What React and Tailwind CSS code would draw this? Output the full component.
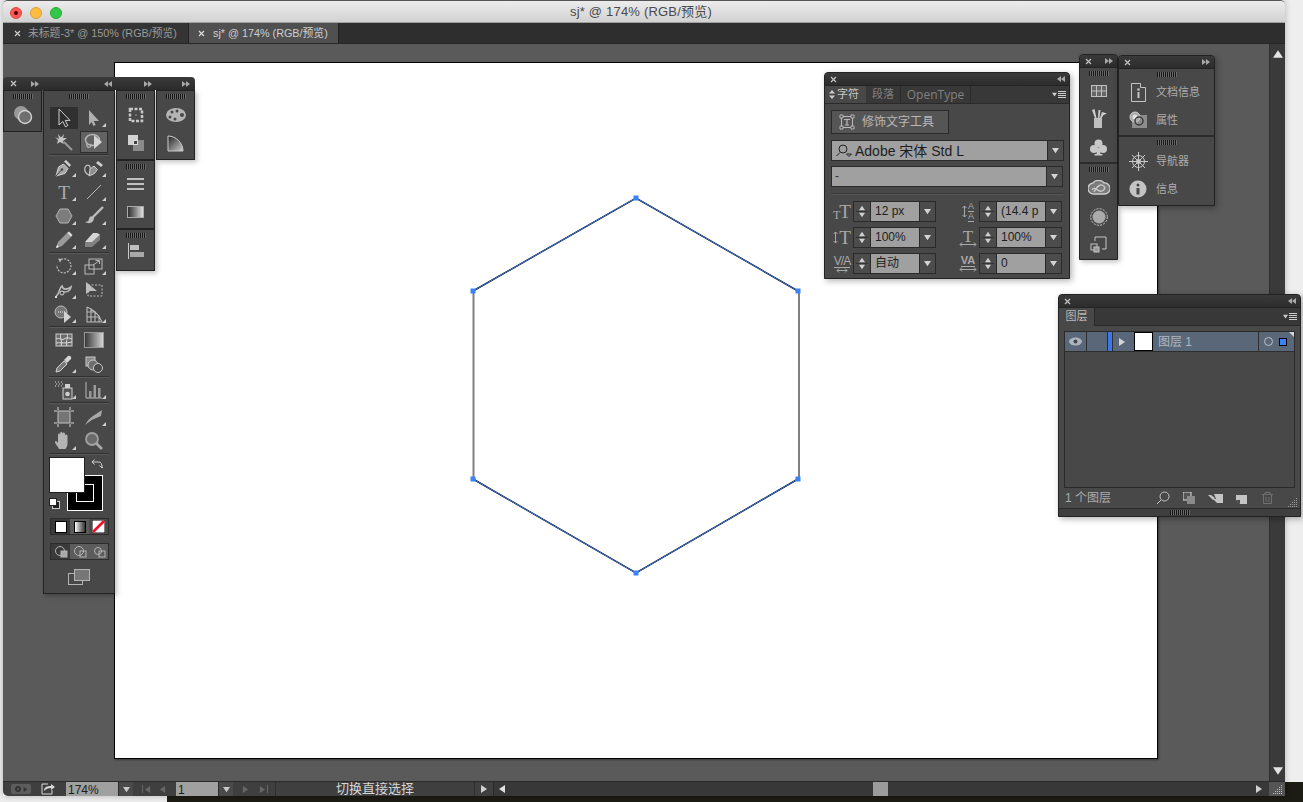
const C = "#b9b9b9";

const Ico = ({ w = 20, h = 20, vb, children, className = "" }) => (
  <svg width={w} height={h} viewBox={vb || `0 0 ${w} ${h}`} className={className} fill="none" stroke={C} strokeWidth="1">
    {children}
  </svg>
);

const Tri = ({ dir = "down", size = 7, color = "#c8c8c8" }) => {
  const pts = { down: "0,1 8,1 4,7", up: "0,7 8,7 4,1", left: "7,0 7,8 1,4", right: "1,0 1,8 7,4" };
  return (
    <svg width={size} height={size} viewBox="0 0 8 8" className="shrink-0">
      <polygon points={pts[dir]} fill={color} />
    </svg>
  );
};

const DoubleArrow = ({ left }) => (
  <svg width="8" height="6" className="shrink-0">
    <path d={left ? "M4 0v6L0 3zM8 0v6L4 3z" : "M0 0v6l4-3zM4 0v6l4-3z"} fill="#a8a8a8" />
  </svg>
);

const CloseX = () => (
  <svg width="7" height="7" viewBox="0 0 7 7">
    <path d="M1 1l5 5M6 1L1 6" stroke="#c4c4c4" strokeWidth="1.2" />
  </svg>
);

const PanelHead = ({ left }) => (
  <div className="h-[13px] flex items-center justify-between pl-[5px] pr-[4px] bg-gradient-to-b from-[#3a3a3a] to-[#2c2c2c] border-b border-[#242424] rounded-t-[4px]">
    <CloseX />
    <DoubleArrow left={left} />
  </div>
);

const Grip = () => (
  <div className="h-[5px] w-[20px] mx-auto bg-[repeating-linear-gradient(90deg,#151515_0,#151515_1px,#6a6a6a_1px,#6a6a6a_2px)]" />
);

const MenuIcon = () => (
  <div className="flex items-center gap-[1px]">
    <Tri size={5} color="#ccc" />
    <div className="w-[8px] h-[7px] bg-[repeating-linear-gradient(180deg,#ccc_0,#ccc_1px,transparent_1px,transparent_2px)]" />
  </div>
);

const DotGrip = ({ color = "#c0c0c0" }) => (
  <svg width="10" height="10">
    {[[8, 0], [6, 2], [8, 2], [4, 4], [6, 4], [8, 4], [2, 6], [4, 6], [6, 6], [8, 6], [0, 8], [2, 8], [4, 8], [6, 8], [8, 8]].map(([x, y]) => (
      <rect key={x + "-" + y} x={x} y={y} width="1" height="1" fill={color} />
    ))}
  </svg>
);

const Cell = ({ children, h = 28 }) => (
  <div className="flex items-center justify-center" style={{ height: h }}>
    {children}
  </div>
);

/* tool icons */
const icons = {
  select: (
    <Ico>
      <path d="M5 1v16l3.8-3.600 2.600 5.400 2.400-1.200-2.600-5.200H16z" fill="#2c2c2c" stroke="#d0d0d0" />
    </Ico>
  ),
  direct: (
    <Ico>
      <path d="M5 2v15l3.500-4H15z" fill="#b0b0b0" stroke="none" />
      <path d="M8 12l2.500 5.500" stroke="#b0b0b0" strokeWidth="2.400" />
    </Ico>
  ),
  wand: (
    <Ico>
      <path d="M1 5l4 2-1-5 3 3.500L10 2 9 6l4 0-4 3 1 3-4-2-3 2 1-4z" fill="#c4c4c4" stroke="none" />
      <path d="M10 10l8 8" stroke="#9a9a9a" strokeWidth="2" />
    </Ico>
  ),
  lasso: (
    <Ico>
      <ellipse cx="8.500" cy="8" rx="7" ry="5.500" strokeWidth="1.400" />
      <path d="M3 11c-1 3 1 5 3 4s1-3 0-3" strokeWidth="1.200" />
      <path d="M10 3v14l8-7z" fill="#d4d4d4" stroke="none" />
    </Ico>
  ),
  pen: (
    <Ico>
      <path d="M2 18l2.500-9 5-3 4.500 4.500-3 5z" fill="#a8a8a8" stroke="#cfcfcf" />
      <path d="M2 18l5.500-6" stroke="#444" />
      <circle cx="8" cy="11.500" r="1.200" fill="#444" stroke="none" />
      <path d="M10 3.500l2-1.500 5 5-1.500 2z" fill="#cfcfcf" stroke="none" />
    </Ico>
  ),
  curve: (
    <Ico>
      <path d="M5 18l1-7 4-3 3.500 3.500-3 4z" fill="#8f8f8f" stroke="#cfcfcf" />
      <path d="M12 5l2-2 5 4-2 2z" fill="#cfcfcf" stroke="none" />
      <path d="M5 17C0 15 0 10 2 8s5 0 4 3" strokeWidth="1.300" />
    </Ico>
  ),
  type: <span className="font-['Liberation_Serif',serif] text-[19px] leading-none text-[#adadad]">T</span>,
  line: (
    <Ico>
      <path d="M3 17L17 3" />
    </Ico>
  ),
  hex: (
    <Ico>
      <polygon points="6,3 14,3 18,10 14,17 6,17 2,10" fill="#7c7c7c" stroke="#b4b4b4" />
    </Ico>
  ),
  brush: (
    <Ico>
      <path d="M19 1L9 11" stroke="#bdbdbd" strokeWidth="2.400" />
      <path d="M10 11c-3-2-5 0-5 2s-2 3-4 3c3 2 9 2 9-5z" fill="#bdbdbd" stroke="none" />
    </Ico>
  ),
  pencil: (
    <Ico>
      <path d="M2 18l2-6L13 3l4 4-9 9z" fill="#9a9a9a" stroke="none" />
      <path d="M13 3l2-1.500 3.500 3.500L17 7z" fill="#dcdcdc" stroke="none" />
      <path d="M2 18l1-3 2 2z" fill="#eee" stroke="none" />
    </Ico>
  ),
  eraser: (
    <Ico>
      <path d="M1 13l8-8h7v5l-8 7H1z" fill="#828282" stroke="none" />
      <path d="M1 12h7l8-7.500L13 3H9z" fill="#d6d6d6" stroke="none" />
    </Ico>
  ),
  rotate: (
    <Ico>
      <path d="M7 3.500A7 7 0 1 1 3 9" strokeDasharray="2 1.300" strokeWidth="1.300" />
      <path d="M4 2.500l4 .5-2 3.500z" fill={C} stroke="none" />
    </Ico>
  ),
  scale: (
    <Ico>
      <rect x="5" y="3" width="13" height="10" />
      <rect x="1" y="9" width="9" height="9" />
      <path d="M9 9l6-4M11.500 4.500H15.500V8" />
    </Ico>
  ),
  warp: (
    <Ico>
      <path d="M2 16c3-1 3-8 6-10 1 4 5 4 9 1-1 5-4 5-8 5" strokeWidth="1.600" />
      <circle cx="8" cy="13" r="2" fill="#3f3f3f" stroke="#ddd" />
      <rect x="1" y="16" width="2" height="2" fill="#ddd" stroke="none" />
    </Ico>
  ),
  free: (
    <Ico>
      <rect x="4" y="5" width="14" height="11" strokeDasharray="2 1.500" />
      <path d="M2 2v12l4-3h7z" fill="#bdbdbd" stroke="none" />
    </Ico>
  ),
  shape: (
    <Ico>
      <circle cx="7" cy="8" r="6" fill="#777" stroke="#bcbcbc" />
      <path d="M4 8h7" stroke="#eee" strokeDasharray="1 1" />
      <path d="M10 7v12l7-6z" fill="#d2d2d2" stroke="none" />
    </Ico>
  ),
  persp: (
    <Ico>
      <path d="M3 3v15h15M3 3l4 2 4 3 4 4 3 6M7 5v13M11 8v10M15 12v6M3 8h9M3 13h13" strokeWidth="1.100" />
    </Ico>
  ),
  mesh: (
    <Ico>
      <rect x="2" y="4" width="16" height="12" fill="#6c6c6c" stroke="#ccc" />
      <path d="M2 9c4-2 5 2 8 0s5-1 8 0M7 4c-2 4 2 6 0 12M13 4c2 4-2 6 0 12M2 13c4-1 10 1 16-1" stroke="#ddd" />
    </Ico>
  ),
  eyedrop: (
    <Ico>
      <path d="M2 18l1-4 7-7 3 3-7 7z" fill="#777" stroke="#d6d6d6" />
      <path d="M10 6l4-4c2-1 4 1 3 3l-4 4z" fill="#d6d6d6" stroke="none" />
    </Ico>
  ),
  blend: (
    <Ico>
      <rect x="2" y="3" width="9" height="9" fill="#8a8a8a" stroke="#c8c8c8" />
      <circle cx="9" cy="11" r="5" fill="#6e6e6e" stroke="#c8c8c8" />
      <circle cx="14" cy="14" r="4.500" fill="#4a4a4a" stroke="#c8c8c8" />
    </Ico>
  ),
  spray: (
    <Ico>
      <rect x="9" y="8" width="9" height="11" fill="#555" stroke="#cfcfcf" />
      <circle cx="13.500" cy="14" r="2.300" fill="#cfcfcf" stroke="none" />
      <rect x="11" y="4" width="5" height="4" fill="#cfcfcf" stroke="none" />
      <path d="M1 2h1M4 2h1M7 2h1M2 4h1M5 4h1M8 4h1M1 6h1M4 6h1M7 6h1" stroke="#e0e0e0" />
    </Ico>
  ),
  graph: (
    <Ico>
      <path d="M2 2v16h16" />
      <rect x="5" y="11" width="2.500" height="7" fill="#999" stroke="none" />
      <rect x="9.500" y="5" width="2.500" height="13" fill="#999" stroke="none" />
      <rect x="14" y="8" width="2.500" height="10" fill="#999" stroke="none" />
    </Ico>
  ),
  artboard: (
    <Ico>
      <rect x="4" y="4" width="12" height="12" fill="#757575" stroke="#c2c2c2" />
      <path d="M4 0v3M16 0v3M4 17v3M16 17v3M0 4h3M0 16h3M17 4h3M17 16h3" stroke="#d6d6d6" />
    </Ico>
  ),
  slice: (
    <Ico>
      <path d="M1 18c2-4 5-7 8-9l9-6-1 6-7 3c-3 1-6 4-9 6z" fill="#a8a8a8" stroke="none" />
    </Ico>
  ),
  hand: (
    <Ico>
      <path d="M5 18c-1-3-4-5-4-7s2-1 3 1V4c0-2 2-2 2 0V2.500c0-2 2.500-2 2.500 0V3c0-2 2.500-2 2.500 0v2c0-2 2.500-2 2.500 0v8c0 2-1 3-2 5z" fill="#b4b4b4" stroke="none" />
    </Ico>
  ),
  zoom: (
    <Ico>
      <circle cx="8" cy="8" r="6" fill="#6a6a6a" stroke="#a0a0a0" strokeWidth="1.800" />
      <path d="M12 12l6 6" stroke="#a8a8a8" strokeWidth="2.600" />
    </Ico>
  ),
  gradient: (
    <svg width="20" height="16">
      <defs>
        <linearGradient id="tg">
          <stop offset="0" stopColor="#333" />
          <stop offset="1" stopColor="#d8d8d8" />
        </linearGradient>
      </defs>
      <rect x=".5" y=".5" width="19" height="15" fill="url(#tg)" stroke="#999" />
    </svg>
  ),
};

const Tool = ({ icon, corner, selected, hot }) => (
  <div
    className={`relative w-[28px] h-[22px] flex items-center justify-center border ${
      selected ? "bg-[#303030] border-[#303030]" : hot ? "bg-[#626262] border-[#2e2e2e]" : "border-transparent"
    }`}
  >
    {icons[icon]}
    {corner && <div className="absolute right-[1px] bottom-[1px] w-0 h-0 border-l-[4px] border-l-transparent border-b-[4px] border-b-[#d0d0d0]" />}
  </div>
);

const ToolRow = ({ a, b, ca, cb, sel, hot }) => (
  <div className="h-[24px] flex items-center gap-[2px] pl-[6px]">
    <Tool icon={a} corner={ca} selected={sel} />
    <Tool icon={b} corner={cb} hot={hot} />
  </div>
);

const Sep = ({ cls = "" }) => <div className={`h-[1px] mx-[5px] bg-[#2f2f2f] border-b border-[#5a5a5a] box-content ${cls}`} />;

const Toolbar = () => (
  <div className="w-[72px] h-[504px] bg-[#484848] border border-[#222] pt-[3px] shadow-[2px_2px_5px_rgba(0,0,0,0.25)]">
    <Grip />
    <div className="h-[7px]" />
    <ToolRow a="select" b="direct" cb sel />
    <ToolRow a="wand" b="lasso" hot />
    <Sep />
    <ToolRow a="pen" b="curve" ca cb />
    <ToolRow a="type" b="line" ca cb />
    <ToolRow a="hex" b="brush" ca cb />
    <ToolRow a="pencil" b="eraser" ca cb />
    <Sep />
    <ToolRow a="rotate" b="scale" ca cb />
    <ToolRow a="warp" b="free" ca />
    <ToolRow a="shape" b="persp" ca cb />
    <Sep />
    <ToolRow a="mesh" b="gradient" />
    <ToolRow a="eyedrop" b="blend" ca />
    <Sep />
    <ToolRow a="spray" b="graph" ca cb />
    <Sep cls="mb-[1px]" />
    <ToolRow a="artboard" b="slice" cb />
    <ToolRow a="hand" b="zoom" ca />
    <Sep cls="mb-[2px]" />
    <div className="relative h-[54px]">
      <div className="absolute left-[23px] top-[18px] w-[36px] h-[36px] bg-black border border-white flex items-center justify-center">
        <div className="w-[18px] h-[18px] border border-white" />
      </div>
      <div className="absolute left-[5px] top-0 w-[36px] h-[36px] bg-white border border-[#222]" />
      <div className="absolute left-[47px] top-[1px]">
        <svg width="12" height="12" viewBox="0 0 12 12" fill="none" stroke="#d0d0d0">
          <path d="M1 4h7c2 0 3 2 3 5M1 4l2.500-2.500M1 4l2.500 2.500M11 10L8.500 7.500M11 10l2-2" />
        </svg>
      </div>
      <div className="absolute left-[5px] top-[41px] w-[8px] h-[8px] bg-white border border-[#222] z-10" />
      <div className="absolute left-[8px] top-[44px] w-[8px] h-[8px] bg-[#222] border border-[#ccc]" />
    </div>
    <div className="h-[7px]" />
    <div className="mx-[6px] h-[17px] w-[59px] flex border border-[#2c2c2c]">
      <div className="flex-1 flex items-center justify-center bg-[#3a3a3a]">
        <div className="w-[12px] h-[12px] bg-white border border-black" />
      </div>
      <div className="flex-1 flex items-center justify-center bg-[#5c5c5c]">
        <div className="w-[12px] h-[12px] bg-gradient-to-r from-white to-[#333] border border-black" />
      </div>
      <div className="flex-1 flex items-center justify-center bg-[#4a4a4a]">
        <svg width="13" height="13">
          <rect width="13" height="13" fill="#fff" stroke="#000" />
          <path d="M1 12L12 1" stroke="#f0102a" strokeWidth="2.600" />
        </svg>
      </div>
    </div>
    <div className="h-[8px]" />
    <div className="mx-[6px] h-[17px] w-[59px] flex border border-[#2c2c2c] bg-[#5c5c5c]">
      {[0, 1, 2].map((i) => (
        <div key={i} className={`flex-1 flex items-center justify-center ${i === 0 ? "bg-[#3a3a3a]" : ""}`}>
          <svg width="14" height="13" fill="none" stroke="#b4b4b4">
            <circle cx="6" cy="6" r={i === 2 ? 3.5 : 4.5} />
            <rect x="7" y="6" width="6" height="6" fill={i === 0 ? "#aaa" : "none"} />
          </svg>
        </div>
      ))}
    </div>
    <div className="h-[9px]" />
    <div className="flex justify-center">
      <svg width="22" height="16" fill="none" stroke="#b4b4b4">
        <rect x=".5" y="4.500" width="14" height="11" />
        <rect x="6.500" y=".5" width="15" height="11" fill="#777" />
      </svg>
    </div>
  </div>
);

const SideCol = ({ children, w = 39, h, cls = "" }) => (
  <div className={`bg-[#484848] border border-[#222] pt-[3px] ${cls}`} style={{ width: w, height: h }}>
    <Grip />
    {children}
  </div>
);

const LeftDock = () => (
  <div className="absolute left-[3px] top-[77px] w-[192px] z-10">
    <div className="h-[13px] bg-gradient-to-b from-[#3a3a3a] to-[#2c2c2c] rounded-t-[4px] flex items-center pl-[7px] w-full">
      <CloseX />
      <div className="ml-[14px] flex"><DoubleArrow /></div>
      <div className="ml-[65px] flex"><DoubleArrow left /></div>
      <div className="ml-[32px] flex"><DoubleArrow /></div>
      <div className="ml-[30px] flex"><DoubleArrow /></div>
    </div>
    <div className="flex items-start gap-[1px]">
      <SideCol h={42}>
        <Cell h={32}>
          <svg width="20" height="20" fill="none">
            <circle cx="8" cy="8" r="7" fill="#9a9a9a" />
            <circle cx="12" cy="12" r="6.500" fill="#6f6f6f" stroke="#d2d2d2" strokeWidth="1.400" />
          </svg>
        </Cell>
      </SideCol>
      <Toolbar />
      <div className="shadow-[2px_2px_5px_rgba(0,0,0,0.25)]">
        <SideCol h={70}>
          <Cell h={32}>
            <svg width="16" height="16" fill="none">
              <rect x="2" y="2" width="12" height="12" stroke="#c8c8c8" strokeWidth="2.500" strokeDasharray="3 1.500" />
              <rect x="7.500" y="7.500" width="1" height="1" fill="#e4e4e4" />
            </svg>
          </Cell>
          <Cell h={24}>
            <svg width="16" height="16" fill="none">
              <rect x="0" y="0" width="10" height="10" fill="#d2d2d2" />
              <rect x="5" y="5" width="11" height="11" fill="#8a8a8a" />
              <rect x="5.500" y="5.500" width="4" height="4" fill="#3e3e3e" stroke="#ddd" />
            </svg>
          </Cell>
        </SideCol>
        <SideCol h={69}>
          <Cell h={30}>
            <div className="w-[17px] h-[12px] bg-[repeating-linear-gradient(180deg,#c0c0c0_0,#c0c0c0_2px,transparent_2px,transparent_5px)]" />
          </Cell>
          <Cell h={26}>
            <div className="w-[17px] h-[12px] bg-gradient-to-r from-[#333] to-[#e0e0e0] border border-[#aaa]" />
          </Cell>
        </SideCol>
        <SideCol h={42}>
          <Cell h={26}>
            <svg width="16" height="16">
              <rect x="0" y="0" width="1" height="16" fill="#c8c8c8" />
              <rect x="2" y="2" width="9" height="5" fill="#c0c0c0" />
              <rect x="2" y="9" width="14" height="5" fill="#a8a8a8" />
            </svg>
          </Cell>
        </SideCol>
      </div>
      <SideCol h={70} cls="shadow-[2px_2px_5px_rgba(0,0,0,0.25)]">
        <Cell h={32}>
          <svg width="20" height="16">
            <ellipse cx="10" cy="8" rx="10" ry="7" fill="#b4b4b4" />
            <circle cx="6" cy="5" r="1.500" fill="#484848" />
            <circle cx="11" cy="4" r="1.500" fill="#484848" />
            <circle cx="4" cy="10" r="1.500" fill="#484848" />
            <circle cx="9" cy="12" r="1.500" fill="#484848" />
            <circle cx="16" cy="8" r="2" fill="#484848" />
          </svg>
        </Cell>
        <Cell h={24}>
          <svg width="17" height="17">
            <defs>
              <linearGradient id="sw" x1="0" y1="0" x2="1" y2="1">
                <stop offset="0" stopColor="#222" />
                <stop offset="1" stopColor="#ccc" />
              </linearGradient>
            </defs>
            <path d="M1 1c8 0 15 7 15 15H1z" fill="url(#sw)" stroke="#ccc" />
          </svg>
        </Cell>
      </SideCol>
    </div>
  </div>
);

const DropBtn = ({ w = 16, h }) => (
  <div className="bg-[#4c4c4c] border-l border-[#2a2a2a] flex items-center justify-center shrink-0" style={{ width: w, height: h }}>
    <Tri size={7} color="#d4d4d4" />
  </div>
);

const Spin = () => (
  <div className="w-[17px] h-[19px] bg-[#4c4c4c] border-r border-[#2a2a2a] flex flex-col items-center justify-center shrink-0">
    <Tri dir="up" size={6} color="#d0d0d0" />
    <div className="w-[12px] h-[1px] bg-[#333]" />
    <Tri size={6} color="#d0d0d0" />
  </div>
);

const NumField = ({ icon, value }) => (
  <div className="flex items-center w-[105px] h-[21px]">
    <div className="w-[22px] flex justify-center shrink-0">{icon}</div>
    <div className="flex border border-[#2a2a2a] h-[21px] flex-1">
      <Spin />
      <div className="flex-1 bg-[#a0a0a0] text-[#1e1e1e] text-[12px] leading-[19px] pl-[4px] whitespace-nowrap overflow-hidden">{value}</div>
      <DropBtn h={19} />
    </div>
  </div>
);

const serifT = (cls, txt = "T") => <span className={`font-['Liberation_Serif',serif] leading-none text-[#a8a8a8] ${cls}`}>{txt}</span>;

const VArrow = () => (
  <svg width="5" height="13" fill="none" stroke="#a8a8a8" className="shrink-0">
    <path d="M2.500 1v11M.5 3l2-2 2 2M.5 10l2 2 2-2" />
  </svg>
);

const HArrow = ({ w = 18 }) => (
  <svg width={w} height="5" fill="none" stroke="#a8a8a8" className="shrink-0">
    <path d={`M1 2.500h${w - 2}M3 .5l-2 2 2 2M${w - 3} .5l2 2-2 2`} />
  </svg>
);

const CharPanel = () => (
  <div className="absolute left-[824px] top-[72px] w-[246px] h-[207px] bg-[#484848] border border-[#222] rounded-t-[4px] shadow-[2px_2px_6px_rgba(0,0,0,0.3)] z-10">
    <PanelHead left />
    <div className="h-[18px] flex bg-[#383838] border-b border-[#2a2a2a] text-[11px] leading-[17px]">
      <div className="w-[41px] bg-[#484848] text-[#c8c8c8] flex items-center gap-[2px] pl-[4px]">
        <svg width="6" height="9" fill="#ccc"><path d="M3 0l3 3.500H0zM3 9L0 5.500h6z" /></svg>
        字符
      </div>
      <div className="w-[35px] text-center text-[#808080] border-r border-[#2a2a2a]">段落</div>
      <div className="w-[70px] text-center text-[#808080] text-[12px] border-r border-[#2a2a2a] font-['Open_Sans',sans-serif]">OpenType</div>
      <div className="flex-1 flex justify-end items-center pr-[3px]"><MenuIcon /></div>
    </div>
    <div className="px-[6px] pt-[6px]">
      <div className="w-[118px] h-[24px] bg-[#555] border border-[#2a2a2a] flex items-center pl-[7px] gap-[7px] text-[#b8b8b8] text-[12px]">
        <Ico w={16} h={16}>
          <rect x="2.500" y="2.500" width="11" height="11" />
          <path d="M5 5.500h6M8 5.500V11M6 11h4" strokeWidth="1.200" />
          <path d="M1 1h3v3H1zM12 1h3v3h-3zM1 12h3v3H1zM12 12h3v3h-3z" fill="#484848" />
        </Ico>
        修饰文字工具
      </div>
      <div className="mt-[6px] h-[21px] w-[233px] flex border border-[#2a2a2a]">
        <div className="flex-1 bg-[#a0a0a0] text-[#1e1e1e] text-[14px] leading-[18px] flex items-center pl-[3px] gap-[2px] whitespace-nowrap">
          <svg width="18" height="13" fill="none" stroke="#222" className="shrink-0">
            <circle cx="8" cy="5" r="4" />
            <path d="M5 8.500L1.500 12M11.500 10h5l-2.500 2.500z" />
          </svg>
          Adobe 宋体 Std L
        </div>
        <DropBtn h={19} />
      </div>
      <div className="mt-[5px] h-[21px] w-[232px] flex border border-[#2a2a2a]">
        <div className="flex-1 bg-[#a0a0a0] text-[#333] text-[12px] leading-[18px] pl-[3px]">-</div>
        <DropBtn h={19} />
      </div>
      <div className="mt-[6px] h-[1px] bg-[#383838] border-b border-[#565656] box-content" />
      <div className="mt-[6px] flex flex-col gap-[5px]">
        <div className="flex gap-[21px]">
          <NumField icon={<span className="flex items-end">{serifT("text-[12px]")}{serifT("text-[19px] -ml-[1px]")}</span>} value="12 px" />
          <NumField
            icon={
              <div className="flex items-center gap-[1px]">
                <VArrow />
                <div className="flex flex-col items-center text-[#a8a8a8] text-[9px] leading-[9px]">
                  <span className="border-b border-[#a8a8a8]">A</span>
                  <span className="border-b border-[#a8a8a8]">A</span>
                </div>
              </div>
            }
            value="(14.4 p"
          />
        </div>
        <div className="flex gap-[21px]">
          <NumField icon={<span className="flex items-center gap-[1px]"><VArrow />{serifT("text-[19px]")}</span>} value="100%" />
          <NumField
            icon={
              <div className="flex flex-col items-center">
                {serifT("text-[17px] h-[14px] leading-[14px]")}
                <HArrow />
              </div>
            }
            value="100%"
          />
        </div>
        <div className="flex gap-[21px]">
          <NumField
            icon={
              <div className="flex flex-col items-center">
                <span className="text-[#a8a8a8] text-[12px] leading-[12px] tracking-[-1px] border-b border-[#a8a8a8]">V/A</span>
                <HArrow w={12} />
              </div>
            }
            value="自动"
          />
          <NumField
            icon={
              <div className="flex flex-col items-center">
                <span className="text-[#a8a8a8] text-[11px] font-bold border-b border-[#a8a8a8] leading-[11px]">VA</span>
                <HArrow />
              </div>
            }
            value="0"
          />
        </div>
      </div>
    </div>
  </div>
);

const IconDock = () => (
  <div className="absolute left-[1079px] top-[54px] w-[39px] h-[206px] bg-[#484848] border border-[#222] rounded-t-[4px] shadow-[2px_2px_5px_rgba(0,0,0,0.25)] z-10">
    <PanelHead />
    <div className="h-[96px] pt-[3px] border-b-2 border-[#2c2c2c]">
      <Grip />
      <Cell h={29}>
        <svg width="16" height="12" fill="none" stroke="#c0c0c0">
          <rect x=".5" y=".5" width="15" height="11" fill="#666" />
          <path d="M5.500 0v12M10.500 0v12M0 6h16" />
        </svg>
      </Cell>
      <Cell h={27}>
        <svg width="17" height="19">
          <rect x="4" y="9" width="8" height="10" fill="#bfbfbf" />
          <path d="M5 9L2 1l2.500-1L6.500 9zM8 9l.5-8h2L9.500 9zM10 9l2-6 5 1.500-3.500 1.500-2 3z" fill="#cfcfcf" />
        </svg>
      </Cell>
      <Cell h={30}>
        <svg width="17" height="17" fill="#c8c8c8">
          <circle cx="8.500" cy="4.500" r="4" />
          <circle cx="4" cy="10" r="4" />
          <circle cx="13" cy="10" r="4" />
          <path d="M7.500 9h2l1 6h2v1.500h-8V15h2z" />
        </svg>
      </Cell>
    </div>
    <div className="pt-[3px]">
      <Grip />
      <Cell h={31}>
        <svg width="22" height="15" fill="none" stroke="#cfcfcf" strokeWidth="1.300">
          <path d="M6 14a5.500 5.500 0 0 1-1-11c2-3.500 9-3.500 11 0a5.500 5.500 0 0 1 1 11z" fill="#7c7c7c" />
          <path d="M4 10c3-5 6 3 10 1s3-5 0-6-5 2-8 7" />
        </svg>
      </Cell>
      <Cell h={27}>
        <svg width="18" height="18" fill="#aaa" stroke="none">
          <circle cx="9" cy="9" r="6.500" />
          <circle cx="9" cy="9" r="8.300" fill="none" stroke="#ccc" strokeDasharray="2 1.300" />
        </svg>
      </Cell>
      <Cell h={29}>
        <svg width="17" height="17" fill="none" stroke="#c4c4c4">
          <path d="M5 5V1h11v12h-4" />
          <rect x="1" y="8" width="6" height="6" />
          <rect x="4" y="11" width="5" height="5" fill="#999" />
        </svg>
      </Cell>
    </div>
  </div>
);

const NavItem = ({ icon, label, h = 28 }) => (
  <div className="flex items-center pl-[9px] gap-[8px] text-[11px] text-[#acacac] whitespace-nowrap" style={{ height: h }}>
    <div className="w-[20px] flex justify-center">{icon}</div>
    {label}
  </div>
);

const InfoPanel = () => (
  <div className="absolute left-[1118px] top-[55px] w-[97px] h-[151px] bg-[#484848] border border-[#222] rounded-t-[4px] shadow-[2px_2px_6px_rgba(0,0,0,0.3)] z-10">
    <PanelHead />
    <div className="h-[68px] pt-[3px] border-b-2 border-[#2c2c2c]">
      <Grip />
      <div className="h-[1px]" />
      <NavItem
        icon={
          <svg width="15" height="19" fill="none" stroke="#c4c4c4">
            <path d="M.5.500h9v4h5v14h-14z" />
            <circle cx="7.500" cy="6.500" r="1.300" fill="#c4c4c4" stroke="none" />
            <rect x="6.500" y="9" width="2" height="6" fill="#c4c4c4" stroke="none" />
          </svg>
        }
        label="文档信息"
      />
      <NavItem
        icon={
          <svg width="18" height="18" fill="none">
            <rect x="3" y="4" width="15" height="13" fill="#8c8c8c" />
            <circle cx="6" cy="6" r="5" fill="#aaa" stroke="#ccc" />
            <circle cx="6" cy="6" r="2.500" fill="#e4e4e4" />
            <circle cx="10" cy="10" r="4" stroke="#3a3a3a" strokeWidth="1.500" />
          </svg>
        }
        label="属性"
      />
    </div>
    <div className="pt-[3px]">
      <Grip />
      <div className="h-[2px]" />
      <NavItem
        icon={
          <svg width="19" height="19" fill="none" stroke="#c8c8c8">
            <circle cx="9.500" cy="9.500" r="6" />
            <circle cx="9.500" cy="9.500" r="2" fill="#c8c8c8" />
            <path d="M9.500 0v19M0 9.500h19M3 3l13 13M16 3L3 16" />
          </svg>
        }
        label="导航器"
      />
      <NavItem
        icon={
          <svg width="18" height="18">
            <circle cx="9" cy="9" r="8.500" fill="#c4c4c4" />
            <circle cx="9" cy="5" r="1.500" fill="#484848" />
            <rect x="7.500" y="8" width="3" height="6.500" fill="#484848" />
          </svg>
        }
        label="信息"
      />
    </div>
  </div>
);

const FootIcon = ({ children }) => <div className="w-[26px] flex justify-center">{children}</div>;

const LayersPanel = () => (
  <div className="absolute left-[1058px] top-[294px] w-[243px] h-[223px] bg-[#484848] border border-[#222] rounded-t-[4px] shadow-[2px_2px_6px_rgba(0,0,0,0.3)] z-10 flex flex-col">
    <PanelHead left />
    <div className="h-[18px] flex bg-[#383838] border-b border-[#2a2a2a] text-[11px] leading-[17px]">
      <div className="w-[36px] bg-[#484848] border-r border-[#2a2a2a] text-center text-[#b8b8b8] h-[18px]">图层</div>
      <div className="flex-1 flex justify-end items-center pr-[3px]"><MenuIcon /></div>
    </div>
    <div className="mx-[5px] mt-[5px] h-[157px] border border-[#2a2a2a]">
      <div className="h-[20px] bg-[#5a6779] border-b border-[#2e2e2e] flex items-stretch relative">
        <div className="w-[22px] border-r border-[#2e2e2e] flex items-center justify-center">
          <svg width="13" height="9">
            <ellipse cx="6.500" cy="4.500" rx="6.500" ry="4" fill="#aeb4bc" />
            <circle cx="6.500" cy="4.500" r="2" fill="#3f4752" />
          </svg>
        </div>
        <div className="w-[21px] border-r border-[#2e2e2e]" />
        <div className="w-[5px] flex items-stretch border-r border-[#2e2e2e]">
          <div className="w-[4px] bg-[#3b78e7]" />
        </div>
        <div className="w-[21px] flex items-center pl-[5px]"><Tri dir="right" size={8} color="#d6d6d6" /></div>
        <div className="w-[19px] h-[19px] bg-white border border-black" />
        <div className="ml-[5px] flex-1 text-[12px] leading-[20px] text-[#b0b6bf] whitespace-nowrap">图层 1</div>
        <div className="w-[36px] border-l border-[#2e2e2e] flex items-center gap-[6px] pl-[5px]">
          <div className="w-[9px] h-[9px] rounded-full border border-[#c0c0c0]" />
          <div className="w-[8px] h-[8px] bg-[#3b82f6] border border-black" />
        </div>
        <div className="absolute right-0 top-0 w-0 h-0 border-l-[5px] border-l-transparent border-t-[5px] border-t-[#d8d8d8]" />
      </div>
    </div>
    <div className="h-[20px] px-[6px] flex items-center justify-between text-[12px] text-[#acacac] relative">
      <span>1 个图层</span>
      <div className="flex items-center mr-[14px]">
        <FootIcon>
          <svg width="14" height="14" fill="none" stroke="#c4c4c4"><circle cx="8.500" cy="5.500" r="4.500" /><path d="M5 9l-4 4" /></svg>
        </FootIcon>
        <FootIcon>
          <svg width="12" height="12"><rect width="8" height="8" fill="#555" stroke="#ddd" /><rect x="4" y="4" width="8" height="8" fill="#8a8a8a" /></svg>
        </FootIcon>
        <FootIcon>
          <svg width="15" height="11"><path d="M0 2h3l4 3-2 2L2 4zM6 1h9v9H9L5 6h3z" fill="#c4c4c4" /></svg>
        </FootIcon>
        <FootIcon>
          <svg width="11" height="11"><path d="M0 2h11v9H4L0 7z" fill="#c4c4c4" /><path d="M0 7h4v4z" fill="#444" /></svg>
        </FootIcon>
        <FootIcon>
          <svg width="11" height="12" fill="none" stroke="#6f6f6f"><path d="M0 2.500h11M3 2V.5h5V2M1.500 3v8.500h8V3M4 5v5M7 5v5" /></svg>
        </FootIcon>
      </div>
      <div className="absolute right-[2px] bottom-0 flex"><DotGrip color="#999" /></div>
    </div>
    <div className="flex-1 border-t border-[#2a2a2a] bg-[#3f3f3f] flex items-center">
      <Grip />
    </div>
  </div>
);

const Hexagon = () => {
  const pts = [
    [636, 198], [798, 291], [798, 479], [636, 573], [473, 479], [473, 291],
  ];
  const diagonals = "M473 291L636 198L798 291M473 479L636 573L798 479";
  return (
    <svg width="1303" height="802" className="absolute left-0 top-0 pointer-events-none">
      <path d={diagonals} fill="none" stroke="#000" strokeWidth="1.500" />
      <path d={diagonals} fill="none" stroke="#3b7bea" strokeWidth="1" />
      <path d="M799 291V479M473.500 291V479" stroke="#808080" strokeWidth="2" />
      {pts.map(([x, y]) => (
        <rect key={x + "-" + y} x={x - 2.5} y={y - 2.5} width="5" height="5" fill="#3b82f6" />
      ))}
    </svg>
  );
};

const NavGlyph = ({ dir, bar }) => (
  <div className="flex items-center gap-[1px] shrink-0">
    {bar && dir === "left" && <div className="w-[1px] h-[8px] bg-[#666]" />}
    <Tri dir={dir} size={7} color="#666" />
    {bar && dir === "right" && <div className="w-[1px] h-[8px] bg-[#666]" />}
  </div>
);

const BottomBar = () => (
  <div className="h-[15px] bg-[#3f3f3f] border-t border-[#2a2a2a] rounded-bl-[5px] flex items-center text-[#d0d0d0] text-[12px] leading-none shrink-0">
    <div className="w-[8px]" />
    <div className="w-[20px] h-[10px] bg-[#5c5c5c] rounded-[2px] flex items-center justify-center gap-[2px]">
      <div className="w-[6px] h-[6px] rounded-full border-2 border-[#333]" />
      <Tri dir="right" size={5} color="#333" />
    </div>
    <div className="w-[10px]" />
    <svg width="14" height="12" fill="none" stroke="#d8d8d8">
      <path d="M7 1H1v10h10V7" />
      <path d="M3 8c0-4 3-5 7-5V1l4 3-4 3V5C7 5 5 6 3 8z" fill="#d8d8d8" stroke="none" />
    </svg>
    <div className="w-[11px]" />
    <div className="w-[52px] h-[14px] bg-[#a0a0a0] text-[#1c1c1c] pl-[2px] leading-[16px] overflow-hidden">174%</div>
    <div className="w-[15px] h-[14px] flex items-center justify-center border-l border-[#2a2a2a] bg-[#4a4a4a]"><Tri size={7} /></div>
    <div className="w-[9px]" />
    <div className="flex items-center gap-[8px] w-[34px]">
      <NavGlyph dir="left" bar />
      <NavGlyph dir="left" />
    </div>
    <div className="w-[42px] h-[14px] bg-[#a0a0a0] text-[#1c1c1c] pl-[2px] leading-[16px] overflow-hidden">1</div>
    <div className="w-[15px] h-[14px] flex items-center justify-center border-l border-[#2a2a2a] bg-[#4a4a4a]"><Tri size={7} /></div>
    <div className="w-[9px]" />
    <div className="flex items-center gap-[10px] w-[33px]">
      <NavGlyph dir="right" />
      <NavGlyph dir="right" bar />
    </div>
    <div className="w-[200px] h-full border-x border-[#2e2e2e] flex items-center justify-center text-[13px] leading-[14px] text-[#d6d6d6]">切换直接选择</div>
    <div className="w-[18px] flex justify-center"><Tri dir="right" size={8} color="#d0d0d0" /></div>
    <div className="flex-1 h-full bg-[#383838] flex items-center border-l border-[#2a2a2a] relative">
      <div className="pl-[4px]"><Tri dir="left" size={8} color="#e0e0e0" /></div>
      <div className="absolute left-[379px] top-0 w-[15px] h-full bg-[#9c9c9c]" />
      <div className="absolute right-[6px]"><Tri dir="right" size={8} color="#d0d0d0" /></div>
    </div>
    <div className="w-[16px] h-full bg-[#555] flex items-end justify-end pr-[2px] pb-[1px]">
      <DotGrip />
    </div>
  </div>
);

const App = () => (
  <div className="relative w-[1303px] h-[802px] overflow-hidden bg-[#eeeeee] font-['Liberation_Sans','Noto_Sans_CJK_SC',sans-serif]">
    <div className="absolute left-[167px] right-0 bottom-0 h-[7px] bg-[#1c1c14]" />
    <div className="absolute left-[1285px] right-0 top-[782px] bottom-0 bg-[#1c1c14]" />
    <div className="relative ml-[3px] w-[1282px] h-[796px] flex flex-col rounded-t-[5px] overflow-hidden border-t border-[#555] shadow-[0_0_6px_rgba(0,0,0,0.25)]">
      <div className="h-[22px] shrink-0 relative bg-gradient-to-b from-[#ececec] to-[#d2d2d2] border-b border-[#a0a0a0] flex items-center justify-center pr-[6px] text-[13px] tracking-[0.2px] text-[#4a4a4a]">
        <div className="absolute left-[7px] top-[6px] flex gap-[8px]">
          <div className="w-[12px] h-[12px] rounded-full bg-[#fc5753] border border-[#df4744] flex items-center justify-center">
            <div className="w-[4px] h-[4px] rounded-full bg-[#4d0000]" />
          </div>
          <div className="w-[12px] h-[12px] rounded-full bg-[#fdbc40] border border-[#de9f34]" />
          <div className="w-[12px] h-[12px] rounded-full bg-[#33c748] border border-[#27aa35]" />
        </div>
        sj* @ 174% (RGB/预览)
      </div>
      <div className="h-[21px] shrink-0 flex bg-[#2e2e2e] border-b border-[#262626] text-[10.8px] leading-[20px]">
        <div className="w-[186px] bg-[#343434] flex items-center pl-[11px] gap-[7px] text-[#9a9a9a] border-r border-[#222]">
          <svg width="7" height="7"><path d="M1 1l5 5M6 1L1 6" stroke="#ccc" strokeWidth="1.200" /></svg>
          未标题-3* @ 150% (RGB/预览)
        </div>
        <div className="w-[150px] bg-[#505050] flex items-center pl-[9px] gap-[8px] text-[#cfcfcf] border-r border-[#222]">
          <svg width="7" height="7"><path d="M1 1l5 5M6 1L1 6" stroke="#ddd" strokeWidth="1.200" /></svg>
          sj* @ 174% (RGB/预览)
        </div>
      </div>
      <div className="flex-1 flex min-h-0">
        <div className="flex-1 bg-[#5a5a5a] pl-[111px] pt-[18px]">
          <div className="w-[1044px] h-[697px] bg-white border border-black shadow-[1px_1px_2px_rgba(0,0,0,0.4)]" />
        </div>
        <div className="w-[16px] bg-[#3a3a3a] border-l border-[#2e2e2e] flex flex-col items-center justify-between py-[5px]">
          <Tri dir="up" size={10} color="#e4e4e4" />
          <Tri size={10} color="#e4e4e4" />
        </div>
      </div>
      <BottomBar />
    </div>
    <Hexagon />
    <LeftDock />
    <CharPanel />
    <IconDock />
    <InfoPanel />
    <LayersPanel />
  </div>
);

export default App;
